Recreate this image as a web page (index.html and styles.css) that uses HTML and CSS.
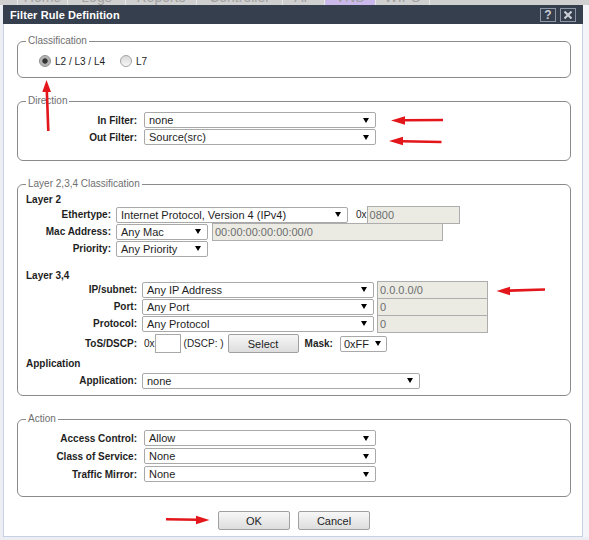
FILE: index.html
```html
<!DOCTYPE html>
<html>
<head>
<meta charset="utf-8">
<title>Filter Rule Definition</title>
<link rel="stylesheet" href="styles.css">
</head>
<body>
<div class="nav">
  <div class="tab"><span></span></div>
  <div class="tab"><span>Home</span></div>
  <div class="tab"><span>Logs</span></div>
  <div class="tab"><span>Reports</span></div>
  <div class="tab"><span>Controller</span></div>
  <div class="tab"><span>AP</span></div>
  <div class="tab vns"><span>VNS</span></div>
  <div class="tab"><span>WIPS</span></div>
  <div class="tab last"><span></span></div>
</div>
<div class="page">
  <div class="dialog">
    <div class="titlebar">
      <span class="title">Filter Rule Definition</span>
      <span class="tbtns">
        <span class="tbtn">?</span>
        <span class="tbtn"><svg width="10" height="10" viewBox="0 0 10 10"><path d="M1.5 1.5 L8.5 8.5 M8.5 1.5 L1.5 8.5" stroke="#c9ced6" stroke-width="2.2" fill="none"/></svg></span>
      </span>
    </div>
    <div class="dbody">
      <fieldset class="fs fs-class">
        <legend>Classification</legend>
        <div class="radios">
          <span class="radio on"></span><span class="rlabel">L2 / L3 / L4</span>
          <span class="radio"></span><span class="rlabel">L7</span>
        </div>
      </fieldset>

      <fieldset class="fs fs-dir">
        <legend>Direction</legend>
        <div class="form form-wide">
          <label>In Filter:</label>
          <div class="sel w232"><span>none</span><span class="caret"></span></div>
          <label>Out Filter:</label>
          <div class="sel w232"><span>Source(src)</span><span class="caret"></span></div>
        </div>
      </fieldset>

      <fieldset class="fs fs-layer">
        <legend>Layer 2,3,4 Classification</legend>
        <div class="h">Layer 2</div>
        <div class="form form-l2">
          <label>Ethertype:</label>
          <div class="cell">
            <div class="sel w232"><span>Internet Protocol, Version 4 (IPv4)</span><span class="caret"></span></div>
            <span class="ox ox-eth">0x</span>
            <div class="dis w93">0800</div>
          </div>
          <label>Mac Address:</label>
          <div class="cell">
            <div class="sel w92"><span>Any Mac</span><span class="caret"></span></div>
            <div class="dis w231 gap4">00:00:00:00:00:00/0</div>
          </div>
          <label>Priority:</label>
          <div class="cell">
            <div class="sel w92"><span>Any Priority</span><span class="caret"></span></div>
          </div>
        </div>

        <div class="h h-l3">Layer 3,4</div>
        <div class="form form-l3">
          <label>IP/subnet:</label>
          <div class="cell">
            <div class="sel w232"><span>Any IP Address</span><span class="caret"></span></div>
            <div class="dis w111 gap3">0.0.0.0/0</div>
          </div>
          <label>Port:</label>
          <div class="cell">
            <div class="sel w232"><span>Any Port</span><span class="caret"></span></div>
            <div class="dis w111 gap3">0</div>
          </div>
          <label>Protocol:</label>
          <div class="cell">
            <div class="sel w232"><span>Any Protocol</span><span class="caret"></span></div>
            <div class="dis w111 gap3">0</div>
          </div>
          <label>ToS/DSCP:</label>
          <div class="cell">
            <span class="ox ox-tos">0x</span>
            <div class="txt"></div>
            <span class="dscp">(DSCP: )</span>
            <span class="btn btn-select">Select</span>
            <label class="mask">Mask:</label>
            <div class="sel w47"><span>0xFF</span><span class="caret"></span></div>
          </div>
        </div>

        <div class="h h-app">Application</div>
        <div class="form form-app">
          <label>Application:</label>
          <div class="cell">
            <div class="sel w278"><span>none</span><span class="caret"></span></div>
          </div>
        </div>
      </fieldset>

      <fieldset class="fs fs-act">
        <legend>Action</legend>
        <div class="form form-wide form-act">
          <label>Access Control:</label>
          <div class="sel w232"><span>Allow</span><span class="caret"></span></div>
          <label>Class of Service:</label>
          <div class="sel w232"><span>None</span><span class="caret"></span></div>
          <label>Traffic Mirror:</label>
          <div class="sel w232"><span>None</span><span class="caret"></span></div>
        </div>
      </fieldset>

      <div class="buttons">
        <span class="btn btn-main">OK</span>
        <span class="btn btn-main">Cancel</span>
      </div>
    </div>
  </div>
  <div class="side"></div>
</div>

<svg class="marks" width="589" height="540" viewBox="0 0 589 540">
  <g fill="#e3161b" stroke="#e3161b">
    <line x1="48.3" y1="131" x2="46.8" y2="90" stroke-width="2.6"/>
    <polygon points="46.5,80 42.3,92 51,92" stroke="none"/>

    <line x1="404" y1="120.3" x2="443" y2="120" stroke-width="2.6"/>
    <polygon points="391,120.5 405,116.3 405,124.7" stroke="none"/>

    <line x1="402" y1="141.3" x2="441.5" y2="142" stroke-width="2.6"/>
    <polygon points="389,141 403,136.8 403,145.2" stroke="none"/>

    <line x1="509" y1="290.6" x2="545" y2="289.5" stroke-width="2.6"/>
    <polygon points="496.5,291 510,286.8 510,295.2" stroke="none"/>

    <line x1="166" y1="519.3" x2="197" y2="519.8" stroke-width="2.6"/>
    <polygon points="209.5,520 196,515.8 196,524.2" stroke="none"/>
  </g>
</svg>
</body>
</html>
```

FILE: styles.css
```css
* {
  box-sizing: border-box;
}

html, body {
  margin: 0;
  padding: 0;
}

body {
  width: 589px;
  height: 540px;
  overflow: hidden;
  position: relative;
  background: #eceef3;
  font-family: "Liberation Sans", Arial, sans-serif;
  font-size: 11px;
  color: #1e1e1e;
}

/* background navigation strip (mostly hidden behind the dialog) */
.nav {
  height: 5px;
  overflow: hidden;
  background: #d0d0d0;
  display: grid;
  grid-template-columns: 18px 50px 58px 71px 86px 42px 51px 54px 1fr;
}

.tab {
  border-right: 1px solid #e8e8e8;
  text-align: center;
  overflow: hidden;
}

.tab.last {
  border-right: 0;
}

.tab span {
  display: block;
  margin-top: -10px;
  font-size: 14px;
  line-height: 14px;
  color: #a2a2a2;
}

.tab.vns {
  background: #cbb9ec;
}

.page {
  display: flex;
}

.dialog {
  margin-left: 3px;
  width: 580px;
  background: #fff;
}

.side {
  flex: 1;
  background: #f4f5f9;
}

.titlebar {
  height: 19px;
  background: #363f4e;
  display: flex;
  align-items: center;
  justify-content: space-between;
  padding: 0 7px 0 7px;
}

.title {
  color: #ffffff;
  font-weight: bold;
  font-size: 11px;
  letter-spacing: 0.1px;
}

.tbtns {
  display: flex;
  gap: 4px;
}

.tbtn {
  width: 16px;
  height: 14px;
  border: 1px solid #8d96a4;
  color: #c9ced6;
  font-weight: bold;
  font-size: 12px;
  line-height: 12px;
  display: flex;
  align-items: center;
  justify-content: center;
}

.dbody {
  border: 1px solid #c5d2e6;
  border-top: 0;
  padding: 11px 11px 6px 13px;
}

/* fieldsets */
.fs {
  margin: 0;
  min-width: 0;
  border: 1px solid #8a8a8a;
  border-radius: 6px;
  padding: 0 8px;
}

.fs + .fs {
  margin-top: 17px;
}

.fs legend {
  padding: 0 2px;
  font-size: 10px;
  line-height: 12px;
  color: #6e6e6e;
}

.fs-class {
  padding-top: 6px;
  padding-bottom: 8px;
}

.fs-dir {
  padding-top: 5px;
  padding-bottom: 15px;
}

.fs-layer {
  padding-top: 4px;
  padding-bottom: 6px;
}

.fs-act {
  padding-top: 5px;
  padding-bottom: 14px;
}

/* radios */
.radios {
  display: flex;
  align-items: center;
  height: 16px;
  padding-left: 13px;
}

.radio {
  width: 12px;
  height: 12px;
  border-radius: 50%;
  border: 1px solid #a3a3a3;
  background: linear-gradient(#d9d9d9, #f7f7f7);
  margin-right: 4px;
}

.radio.on {
  border-color: #8c8c8c;
  background: radial-gradient(circle, #333 0, #333 2.3px, #aaa 3px, #cfcfcf 100%);
}

.rlabel {
  font-size: 10px;
  margin-right: 15px;
  color: #1e1e1e;
}

/* forms */
.form {
  display: grid;
  align-items: center;
}

.form label,
.mask {
  text-align: right;
  font-weight: bold;
  font-size: 10px;
  white-space: nowrap;
}

.form-wide {
  grid-template-columns: 111px 232px;
  column-gap: 7px;
  row-gap: 1px;
  grid-auto-rows: 16px;
}

.form-act {
  row-gap: 2px;
}

.form-l2 {
  grid-template-columns: 85px auto;
  column-gap: 5px;
  grid-auto-rows: 17px;
}

.form-l3 {
  grid-template-columns: 111px auto;
  column-gap: 5px;
  grid-template-rows: 17px 17px 17px 23px;
}

.form-app {
  grid-template-columns: 111px auto;
  column-gap: 5px;
  grid-auto-rows: 17px;
  margin-top: 3px;
}

.cell {
  display: flex;
  align-items: center;
}

.h {
  font-weight: bold;
  font-size: 10px;
  line-height: 12px;
  height: 12px;
}

.h-l3 {
  margin-top: 13px;
  line-height: 11px;
  height: 11px;
}

.h-app {
  margin-top: 3px;
  line-height: 11px;
  height: 11px;
}

/* select look-alike */
.sel {
  height: 16px;
  border: 1px solid #a9a9a9;
  border-radius: 2px;
  background: #fff;
  display: flex;
  align-items: center;
  justify-content: space-between;
  padding: 0 6px 0 4px;
  font-size: 11px;
  color: #1e1e1e;
  white-space: nowrap;
  overflow: hidden;
}

.caret {
  width: 0;
  height: 0;
  border-left: 3px solid transparent;
  border-right: 3px solid transparent;
  border-top: 5px solid #000;
  flex: none;
}

.w232 { width: 232px; }
.w92 { width: 92px; }
.w47 { width: 47px; padding-left: 3px; padding-right: 5px; }
.w278 { width: 278px; }
.w93 { width: 93px; }
.w231 { width: 231px; }
.w111 { width: 111px; }

.gap4 { margin-left: 4px; }
.gap3 { margin-left: 3px; }

.dis {
  height: 18px;
  border: 1px solid #adadad;
  background: #ebebe4;
  color: #6d6d6d;
  padding-left: 2px;
  font-size: 11px;
  line-height: 16px;
  white-space: nowrap;
}

.ox {
  font-size: 10px;
  color: #1e1e1e;
}

.ox-eth {
  margin-left: 8px;
}

.ox-tos {
  margin-left: 2px;
}

.txt {
  width: 26px;
  height: 19px;
  border: 1px solid #a9a9a9;
  background: #fff;
}

.dscp {
  margin-left: 3px;
  font-size: 10px;
}

.btn {
  display: flex;
  align-items: center;
  justify-content: center;
  height: 19px;
  border: 1px solid #a0a0a0;
  border-radius: 2px;
  background: linear-gradient(#f7f7f7, #dddddd);
  font-size: 11px;
  color: #1e1e1e;
}

.btn-select {
  width: 71px;
  margin-left: 4px;
}

.mask {
  margin-left: 6px;
  margin-right: 7px;
}

.buttons {
  margin-top: 14px;
  display: flex;
  justify-content: center;
  gap: 8px;
}

.btn-main {
  width: 72px;
}

.marks {
  position: absolute;
  left: 0;
  top: 0;
  pointer-events: none;
}
```
